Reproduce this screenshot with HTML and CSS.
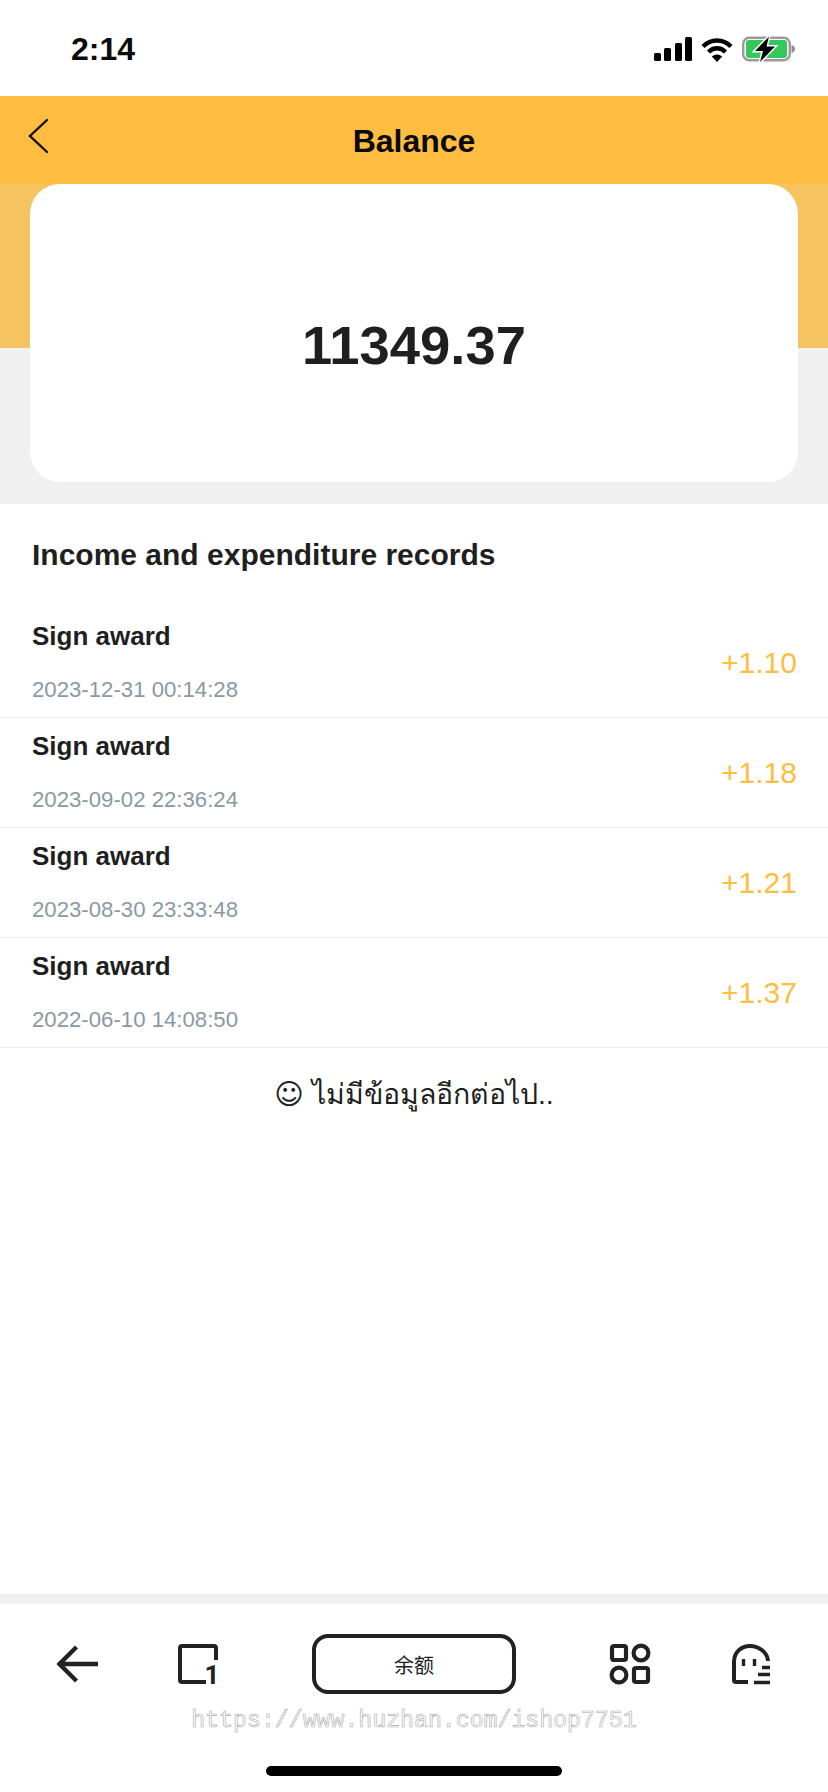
FILE: index.html
```html
<!doctype html>
<html lang="th">
  <head>
    <meta charset="utf-8">
    <meta name="viewport" content="width=device-width, initial-scale=1">
    <title>Balance</title>
    <link rel="stylesheet" href="styles.css">
  </head>
  <body>
    <div class="page">

      <div class="status">
        <span class="time">2:14</span>
        <div class="statusIcons">
          <svg class="signal" width="38" height="24" viewBox="0 0 38 24">
            <rect x="0" y="16" width="7" height="8" rx="1.5"/>
            <rect x="10" y="11" width="7" height="13" rx="1.5"/>
            <rect x="21" y="6" width="7" height="18" rx="1.5"/>
            <rect x="31" y="0" width="7" height="24" rx="1.5"/>
          </svg>
          <svg class="wifi" width="32" height="25" viewBox="0 0 32 25">
            <path d="M2 9.5C10 1.5 22 1.5 30 9.5" fill="none" stroke="#000" stroke-width="4.4"/>
            <path d="M7.5 15C12.5 10 19.5 10 24.5 15" fill="none" stroke="#000" stroke-width="4.4"/>
            <path d="M10.8 19.6C14 16.8 18 16.8 21.2 19.6L16 25Z"/>
          </svg>
          <svg class="battery" width="53" height="26" viewBox="0 0 53 26">
            <rect x="1.2" y="1.8" width="46.6" height="22.4" rx="6" fill="#fff" stroke="#9a9a9a" stroke-width="2.4"/>
            <rect x="4" y="4" width="41" height="18" rx="3" fill="#34c759"/>
            <path d="M49.5 9C51.5 9.6 53 11 53 13C53 15 51.5 16.4 49.5 17Z" fill="#8e8e8e"/>
            <path d="M27 0.5L13 15H21L18 26L33 10.5H24.500Z" stroke="#fff" stroke-width="3" paint-order="stroke"/>
          </svg>
        </div>
      </div>

      <header class="topbar">
        <svg class="backIcon" width="22" height="36" viewBox="0 0 22 36">
          <path d="M20 2L3 18L20 34" fill="none" stroke="#111" stroke-width="2.4" stroke-linecap="round"/>
        </svg>
        <h1>Balance</h1>
      </header>

      <section class="hero">
        <div class="card">11349.37</div>
      </section>

      <main class="records">
        <h2>Income and expenditure records</h2>
        <ul class="recordList">
          <li class="row">
            <div class="rowInfo">
              <div class="rowName">Sign award</div>
              <div class="rowDate">2023-12-31 00:14:28</div>
            </div>
            <span class="rowAmount">+1.10</span>
          </li>
          <li class="row">
            <div class="rowInfo">
              <div class="rowName">Sign award</div>
              <div class="rowDate">2023-09-02 22:36:24</div>
            </div>
            <span class="rowAmount">+1.18</span>
          </li>
          <li class="row">
            <div class="rowInfo">
              <div class="rowName">Sign award</div>
              <div class="rowDate">2023-08-30 23:33:48</div>
            </div>
            <span class="rowAmount">+1.21</span>
          </li>
          <li class="row">
            <div class="rowInfo">
              <div class="rowName">Sign award</div>
              <div class="rowDate">2022-06-10 14:08:50</div>
            </div>
            <span class="rowAmount">+1.37</span>
          </li>
        </ul>
        <p class="noMore"><span class="smile">☺</span>ไม่มีข้อมูลอีกต่อไป..</p>
      </main>

      <footer class="bottom">
        <nav class="nav">
          <svg class="navIcon" width="44" height="40" viewBox="0 0 44 40">
            <path d="M2 20H42M20.5 3L3.5 20L20.5 37" fill="none" stroke="#222" stroke-width="4.4"/>
          </svg>
          <svg class="navIcon tabIcon" width="40" height="40" viewBox="0 0 40 40">
            <path d="M28 38H4C2.900 38 2 37.100 2 36V4C2 2.900 2.900 2 4 2H36C37.100 2 38 2.900 38 4V16" fill="none" stroke="#222" stroke-width="4"/>
            <text class="tabCount" x="41.500" y="40" text-anchor="end">1</text>
          </svg>
          <button class="pill" type="button">余额</button>
          <svg class="navIcon" width="40" height="40" viewBox="0 0 40 40">
            <rect x="2" y="2" width="14" height="14" rx="2" fill="none" stroke="#222" stroke-width="4.200"/>
            <circle cx="31" cy="9" r="7.400" fill="none" stroke="#222" stroke-width="4.200"/>
            <circle cx="9" cy="31" r="7.400" fill="none" stroke="#222" stroke-width="4.200"/>
            <rect x="24" y="24" width="14" height="14" rx="2" fill="none" stroke="#222" stroke-width="4.200"/>
          </svg>
          <svg class="navIcon ghostIcon" width="40" height="42" viewBox="0 0 40 42">
            <path d="M17 39H5C3.500 39 3 38.500 3 37V19C3 9.500 10 3 19 3C28 3 36.500 9.500 37 18" fill="none" stroke="#222" stroke-width="4"/>
            <path d="M12.500 16V23M23.500 16V23" fill="none" stroke="#222" stroke-width="3.400"/>
            <path d="M31 24.500H39M27 31.500H39M23 39.500H39" fill="none" stroke="#222" stroke-width="3.600"/>
          </svg>
        </nav>
        <div class="watermark">https://www.huzhan.com/ishop7751</div>
        <div class="homeBar"></div>
      </footer>

    </div>
  </body>
</html>
```

FILE: styles.css
```css
* {
  margin: 0;
  padding: 0;
  box-sizing: border-box;
}

body {
  font-family: "Liberation Sans", Arial, "Noto Sans CJK SC", sans-serif;
  color: #1f1f1f;
  background: #fff;
  overflow: hidden;
}

.page {
  display: flex;
  flex-direction: column;
  height: 1792px;
}

/* status bar */
.status {
  height: 96px;
  display: flex;
  align-items: center;
  justify-content: space-between;
  padding: 2px 33px 0 71px;
  flex: none;
}
.time {
  font-size: 32px;
  font-weight: bold;
  color: #0a0a0a;
}
.statusIcons {
  display: flex;
  align-items: center;
  gap: 9px;
}

/* yellow header */
.topbar {
  height: 88px;
  padding-top: 2px;
  background: #febd40;
  display: flex;
  align-items: center;
  justify-content: center;
  position: relative;
  flex: none;
}
.topbar h1 {
  font-size: 32px;
  font-weight: bold;
  color: #0a0a0a;
}
.backIcon {
  position: absolute;
  left: 27px;
  top: 22px;
}

.hero {
  height: 320px;
  padding: 0 30px;
  background: linear-gradient(#f5c35f 164px, #f0f0f0 164px);
  flex: none;
}
.card {
  height: 298px;
  padding-top: 24px;
  background: #fff;
  border-radius: 30px;
  display: flex;
  align-items: center;
  justify-content: center;
  font-size: 54.400px;
  font-weight: bold;
}

/* records */
.records {
  flex: 1;
}
.records h2 {
  font-size: 30px;
  font-weight: bold;
  padding: 34px 32px 0;
  height: 104px;
}
.recordList {
  list-style: none;
}
.row {
  height: 110px;
  border-bottom: 1px solid #ececec;
  padding: 0 32px;
  display: flex;
  justify-content: space-between;
  align-items: center;
}
.rowInfo {
  margin-bottom: 2px;
}
.rowName {
  font-size: 26px;
  font-weight: bold;
  line-height: 30px;
  margin-bottom: 26px;
}
.rowDate {
  font-size: 22.200px;
  line-height: 26px;
  color: #8a99a4;
}
.rowAmount {
  font-size: 30px;
  color: #febd40;
  margin-right: -1px;
}
.noMore {
  margin-top: 25px;
  text-align: center;
  font-size: 28.500px;
  line-height: 42px;
  font-family: "Liberation Sans", "Noto Sans", "DejaVu Sans", sans-serif;
}
.smile {
  font-family: "DejaVu Sans", sans-serif;
  margin-right: 8px;
}

/* bottom bar */
.bottom {
  flex: none;
  height: 198px;
  border-top: 10px solid #f0f0f0;
  background: #fff;
}
.nav {
  display: grid;
  grid-template-columns: 120px 120px 1fr 120px 120px;
  justify-items: center;
  align-items: center;
  padding: 30px 18px 0;
  height: 90px;
}
.navIcon {
  overflow: visible;
}
.ghostIcon {
  margin-left: 1px;
}
.pill {
  width: 204px;
  height: 60px;
  background: #fff;
  border: 4px solid #222;
  border-radius: 16px;
  font-size: 20px;
  color: #222;
  font-family: "Noto Sans CJK SC", sans-serif;
}
.tabCount {
  font-family: Roboto, sans-serif;
  font-size: 26px;
  font-weight: bold;
  fill: #222;
}
.watermark {
  margin-top: 14px;
  text-align: center;
  font-family: "Liberation Mono", monospace;
  font-size: 23.200px;
  line-height: 26px;
  color: #fff;
  -webkit-text-stroke: 0.6px #aaa;
}
.homeBar {
  width: 296px;
  height: 10px;
  border-radius: 5px;
  background: #000;
  margin: 32px auto 0;
}
```
